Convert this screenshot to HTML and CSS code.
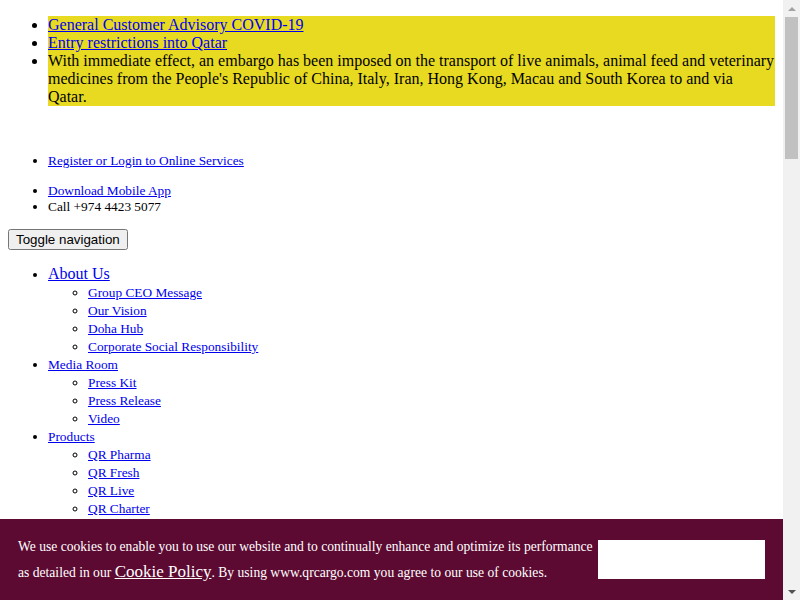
FILE: index.html
```html
<!DOCTYPE html>
<html lang="en">
<head>
<meta charset="utf-8">
<title>Qatar Airways Cargo</title>
<link rel="stylesheet" href="styles.css">
</head>
<body>
<div class="window">
  <div class="content">
    <ul class="alerts">
      <li><a href="#">General Customer Advisory COVID-19</a></li>
      <li><a href="#">Entry restrictions into Qatar</a></li>
      <li>With immediate effect, an embargo has been imposed on the transport of live animals, animal feed and veterinary medicines from the People's Republic of China, Italy, Iran, Hong Kong, Macau and South Korea to and via Qatar.</li>
    </ul>

    <ul class="login">
      <li><a href="#">Register or Login to Online Services</a></li>
    </ul>
    <ul class="apps">
      <li><a href="#">Download Mobile App</a></li>
      <li>Call +974 4423 5077</li>
    </ul>

    <button class="toggle" type="button">Toggle navigation</button>

    <ul class="nav">
      <li class="nav-top"><a href="#">About Us</a>
        <ul class="sub">
          <li><a href="#">Group CEO Message</a></li>
          <li><a href="#">Our Vision</a></li>
          <li><a href="#">Doha Hub</a></li>
          <li><a href="#">Corporate Social Responsibility</a></li>
        </ul>
      </li>
      <li><a href="#">Media Room</a>
        <ul class="sub">
          <li><a href="#">Press Kit</a></li>
          <li><a href="#">Press Release</a></li>
          <li><a href="#">Video</a></li>
        </ul>
      </li>
      <li><a href="#">Products</a>
        <ul class="sub">
          <li><a href="#">QR Pharma</a></li>
          <li><a href="#">QR Fresh</a></li>
          <li><a href="#">QR Live</a></li>
          <li><a href="#">QR Charter</a></li>
        </ul>
      </li>
    </ul>
  </div>

  <div class="scrollbar" aria-hidden="true">
    <div class="sb-btn"><span class="arrow-up"></span></div>
    <div class="sb-track"><div class="sb-thumb"></div></div>
    <div class="sb-btn"><span class="arrow-down"></span></div>
  </div>
</div>

<div class="cookie">
  <p class="cookie-text">We use cookies to enable you to use our website and to continually enhance and optimize its performance as detailed in our <a class="cookie-link" href="#">Cookie Policy</a>. By using www.qrcargo.com you agree to our use of cookies.</p>
  <div class="cookie-accept"></div>
</div>
</body>
</html>
```
FILE: styles.css
```css
html,
body {
  margin: 0;
  height: 100%;
  overflow: hidden;
}
body {
  color: #000;
  background: #fff;
  font-family: "Liberation Serif", "Times New Roman", serif;
}
a {
  color: #0000ee;
}
.window {
  display: flex;
  height: 600px;
}
.content {
  flex: 1;
  min-width: 0;
  padding: 0 8px;
  overflow: hidden;
}
.alerts {
  margin: 16px 0 0;
  padding-left: 40px;
  font-size: 16px;
  line-height: 18px;
}
.alerts li {
  background: #e8da21;
}
.login {
  margin: 47px 0 0;
  padding-left: 40px;
  font-size: 13.333px;
  line-height: 15px;
}
.apps {
  margin: 15px 0 0;
  padding-left: 40px;
  font-size: 13.333px;
  line-height: 16px;
}
.toggle {
  display: block;
  margin: 14px 0 0;
  font-family: "Liberation Sans", Arial, sans-serif;
  font-size: 13.333px;
}
.nav {
  margin: 15px 0 0;
  padding-left: 40px;
  font-size: 13.333px;
  line-height: 18px;
}
.nav-top > a {
  font-size: 16px;
}
.sub {
  margin: 0;
  padding-left: 40px;
  list-style: circle;
}

/* classic scrollbar */
.scrollbar {
  flex: 0 0 17px;
  display: flex;
  flex-direction: column;
  background: #f1f1f1;
}
.sb-btn {
  height: 17px;
  display: flex;
  align-items: center;
  justify-content: center;
}
.arrow-up {
  width: 0;
  height: 0;
  border-left: 4px solid transparent;
  border-right: 4px solid transparent;
  border-bottom: 4px solid #a3a3a3;
}
.arrow-down {
  width: 0;
  height: 0;
  border-left: 4px solid transparent;
  border-right: 4px solid transparent;
  border-top: 4px solid #505050;
}
.sb-track {
  flex: 1;
  padding: 0 2px;
}
.sb-thumb {
  height: 142px;
  background: #c1c1c1;
}

/* cookie banner */
.cookie {
  position: fixed;
  left: 0;
  right: 17px;
  bottom: 0;
  height: 81px;
  box-sizing: border-box;
  padding: 15px 18px 0 18px;
  background: #5c0a32;
  color: #fff;
  display: flex;
  justify-content: space-between;
  align-items: flex-start;
}
.cookie-text {
  margin: 0;
  flex: 0 0 578px;
  font-size: 13.6px;
  line-height: 25px;
}
.cookie-link {
  color: #fff;
  font-size: 17px;
}
.cookie-accept {
  flex: 0 0 167px;
  height: 39px;
  margin-top: 6px;
  background: #fff;
}
```
